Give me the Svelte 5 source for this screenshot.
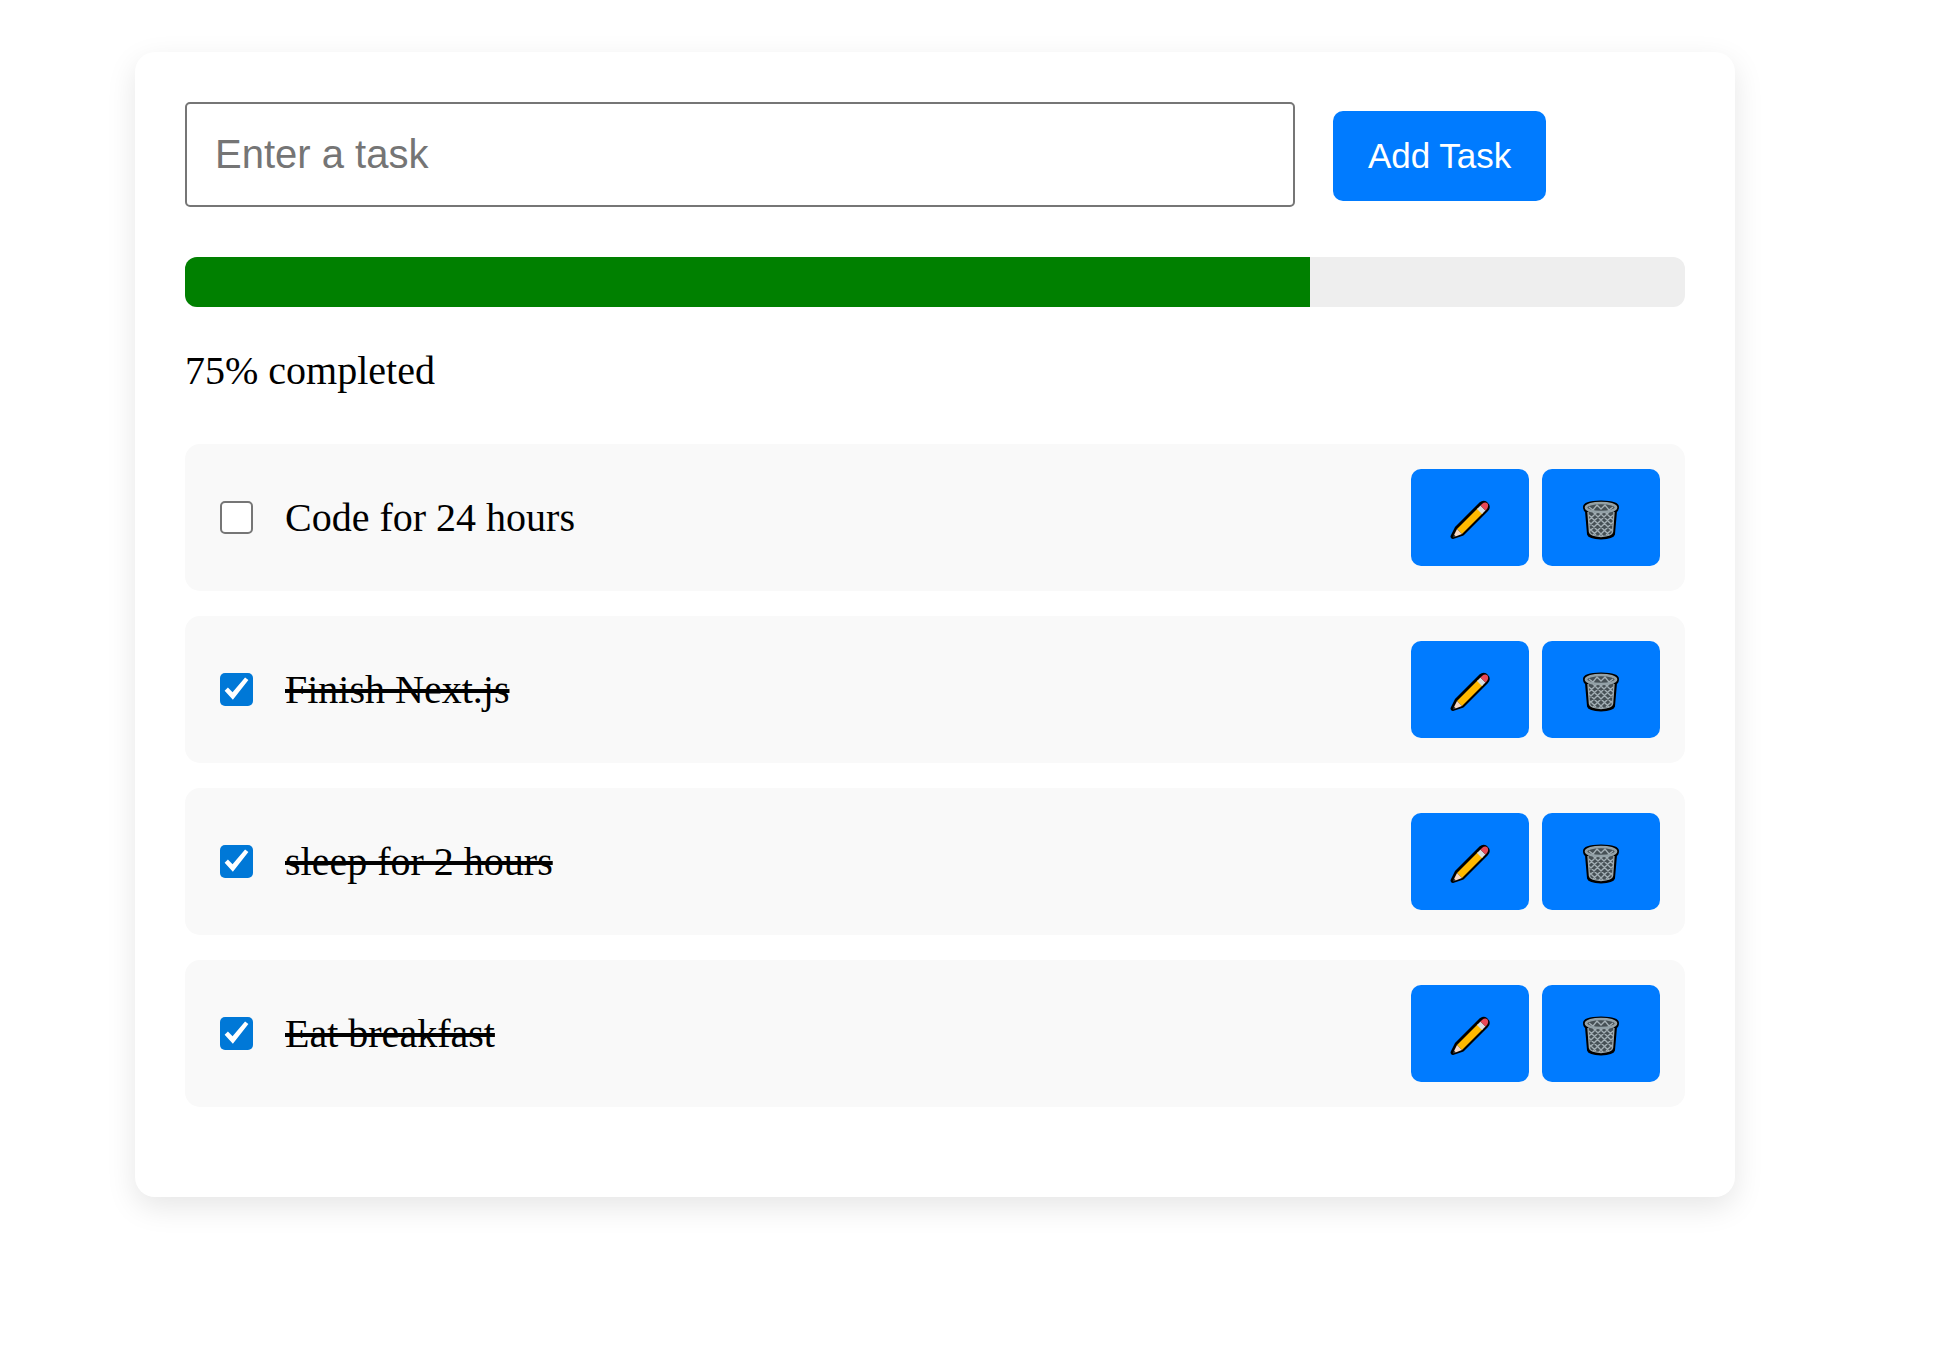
<script>
  let draft = $state('');
  let tasks = $state([
    { id: 1, title: 'Code for 24 hours', done: false },
    { id: 2, title: 'Finish Next.js', done: true },
    { id: 3, title: 'sleep for 2 hours', done: true },
    { id: 4, title: 'Eat breakfast', done: true }
  ]);
  let nextId = 5;

  let percent = $derived(
    tasks.length ? Math.round((tasks.filter((t) => t.done).length / tasks.length) * 100) : 0
  );

  function addTask(event) {
    event.preventDefault();
    const title = draft.trim();
    if (!title) return;
    tasks.push({ id: nextId++, title, done: false });
    draft = '';
  }

  function editTask(task) {
    const title = window.prompt('Edit task', task.title);
    if (title) task.title = title;
  }

  function removeTask(id) {
    tasks = tasks.filter((t) => t.id !== id);
  }
</script>

<main class="page">
  <section class="card">
    <form class="entry" onsubmit={addTask}>
      <input class="field" type="text" placeholder="Enter a task" aria-label="Enter a task" bind:value={draft} />
      <button class="btn add" type="submit">Add Task</button>
    </form>

    <div class="track" role="progressbar" aria-label="Completed tasks" aria-valuenow={percent} aria-valuemin="0" aria-valuemax="100">
      <div class="fill" style="width: {percent}%"></div>
    </div>
    <p class="status">{percent}% completed</p>

    <ul class="list">
      {#each tasks as task (task.id)}
        <li class="row">
          <input class="check" id="task-{task.id}" type="checkbox" bind:checked={task.done} />
          <label class="title" class:done={task.done} for="task-{task.id}">{task.title}</label>
          <button class="btn icon" type="button" aria-label="Edit {task.title}" onclick={() => editTask(task)}>
            <svg viewBox="0 0 40 40" aria-hidden="true">
              <path d="M3 36.500 L7 28.500 L31 4.500 Q34 2 36 4.500 Q38.500 7 36 9.500 L12 33.500Z" fill="#000" stroke="#000" stroke-width="5" stroke-linejoin="round" />
              <path d="M7 29 L28 8 L33 13 L12 34Z" fill="#ffb900" />
              <path d="M7 29 L12 34 L5.500 36.500 L4 35Z" fill="#f7d7c4" />
              <path d="M4 34.500 L6 36.500 L3 37.500Z" fill="#444" />
              <path d="M27 9 L30.500 5.500 L35.500 10.500 L32 14Z" fill="#d8dde0" />
              <path d="M30.500 5.500 L32 4 Q35 1.500 37.500 3.500 Q39 6 37 9 L35.500 10.500Z" fill="#e74856" />
            </svg>
          </button>
          <button class="btn icon" type="button" aria-label="Delete {task.title}" onclick={() => removeTask(task.id)}>
            <svg viewBox="0 0 40 40" aria-hidden="true">
              <path d="M4 7 C4 1 36 1 36 7 Q36 10 34 11 L32 34 Q31 37 20 37.500 Q9 37 8 34 L6 11 Q4 10 4 7Z" fill="#000" stroke="#000" stroke-width="4" stroke-linejoin="round" />
              <path d="M7 11 H33 L31.500 32 Q31 36 20 36.500 Q9 36 8.500 32Z" fill="#465055" />
              <path
                d="M8 15 L28 35 M8 22 L22 36 M9 29 L15 35 M12 12 L31 31 M18 12 L31.500 25.500 M24 12 L32 20 M32 15 L12 35 M32 22 L18 36 M31 29 L25 35 M28 12 L9 31 M22 12 L8.500 25.500 M16 12 L8 20"
                stroke="#a3afb5" stroke-width="1.400" fill="none"
              />
              <path d="M7 12 L8.500 32 Q9 36 20 36.500 Q31 36 31.500 32 L33 12" fill="none" stroke="#9aa7ad" stroke-width="1.400" />
              <ellipse cx="20" cy="7.500" rx="15" ry="4.500" fill="#465055" />
              <path d="M8 7 L12 10 L16 5 L20 9 L24 5 L28 10 L32 7" fill="none" stroke="#a3afb5" stroke-width="1.300" />
              <ellipse cx="20" cy="7.500" rx="15" ry="4.500" fill="none" stroke="#93a1a7" stroke-width="2.600" />
            </svg>
          </button>
        </li>
      {/each}
    </ul>
  </section>
</main>

<style>
  :global(body) {
    background: #fff;
  }

  .page {
    padding: 52px 206px 52px 135px;
    font-family: 'Liberation Serif', 'Times New Roman', serif;
    font-size: 40px;
    line-height: 46px;
    color: #000;
  }

  .card {
    padding: 50px 50px 90px;
    border-radius: 20px;
    background: #fff;
    box-shadow: 0 10px 30px rgba(0, 0, 0, 0.1);
  }

  .entry {
    display: flex;
    align-items: baseline;
    gap: 38px;
  }

  .field {
    box-sizing: content-box;
    width: 70%;
    height: 45px;
    padding: 28px;
    border: 2px solid #767676;
    border-radius: 5px;
    background: #fff;
    font-family: 'Liberation Sans', Arial, sans-serif;
    font-size: 40px;
    color: #000;
  }

  .field::placeholder {
    color: #757575;
    opacity: 1;
  }

  .btn {
    flex: none;
    border: 0;
    border-radius: 10px;
    background: #007bff;
    color: #fff;
    cursor: pointer;
  }

  .add {
    padding: 25px 35px;
    font-family: 'Liberation Sans', Arial, sans-serif;
    font-size: 35px;
    line-height: 40px;
  }

  .track {
    height: 50px;
    margin-top: 50px;
    border-radius: 12px;
    background: #eee;
    overflow: hidden;
  }

  .fill {
    height: 100%;
    background: #008000;
  }

  .status {
    margin: 41px 0 50px;
  }

  .list {
    display: flex;
    flex-direction: column;
    gap: 25px;
    margin: 0;
    padding: 0;
    list-style: none;
  }

  .row {
    display: flex;
    align-items: center;
    gap: 13px;
    padding: 25px 25px 25px 35px;
    border-radius: 15px;
    background: #f9f9f9;
  }

  .check {
    appearance: none;
    box-sizing: border-box;
    flex: none;
    width: 33px;
    height: 33px;
    margin: 0;
    border: 2px solid #767676;
    border-radius: 5px;
    background: #fff;
  }

  .check:checked {
    border: 0;
    background: #0078d7;
  }

  .check:checked::before {
    content: '';
    display: block;
    height: 100%;
    background: #fff;
    clip-path: polygon(14% 54%, 24% 44%, 38% 58%, 76% 14%, 86% 21%, 39% 81%);
  }

  .title {
    flex: 1;
    padding-left: 19px;
  }

  .done {
    text-decoration: line-through;
  }

  .icon {
    display: flex;
    align-items: center;
    justify-content: center;
    width: 118px;
    height: 97px;
    padding: 5px 0 0;
  }

  .icon svg {
    width: 40px;
    height: 40px;
  }
</style>
